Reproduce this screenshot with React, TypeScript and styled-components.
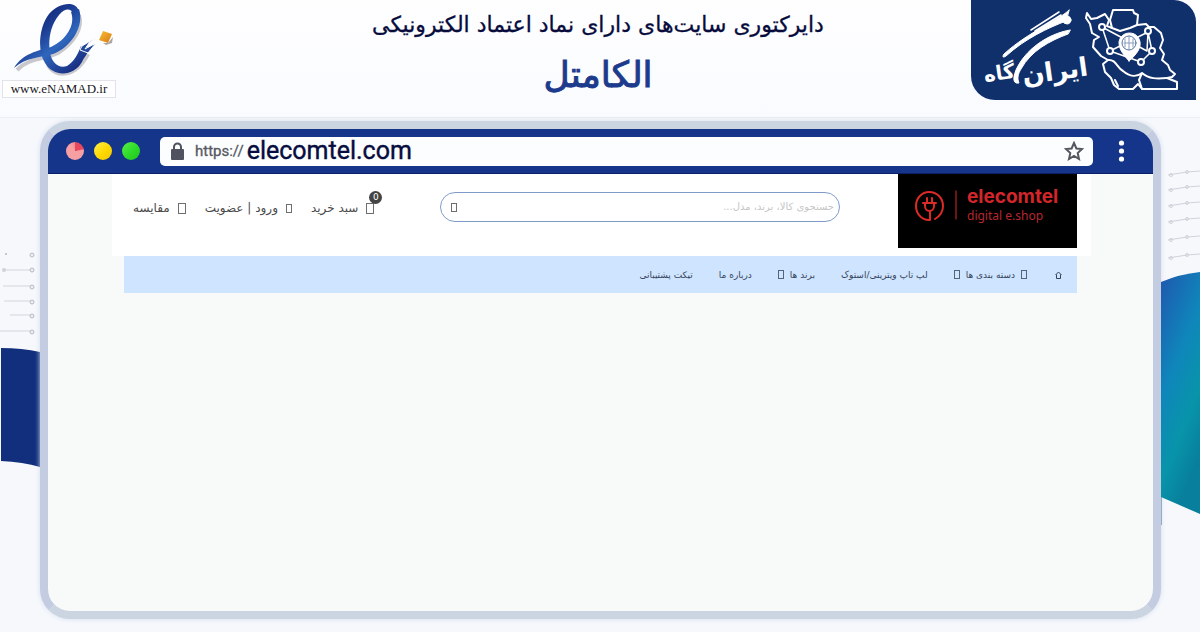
import React from "react";
import styled, { createGlobalStyle } from "styled-components";

const fa = `"DejaVu Sans", "Noto Sans", sans-serif`;

const Global = createGlobalStyle`
  * { box-sizing: border-box; }
  body { margin: 0; background: #f6f8fc; font-family: ${fa}; }
  a { color: inherit; text-decoration: none; }
  h1, p { margin: 0; font-weight: 400; }
`;

const Page = styled.div`
  min-height: 100vh;
  display: flex;
  flex-direction: column;
`;

const Header = styled.header`
  display: grid;
  grid-template-columns: 224px 1fr 228px;
  height: 118px;
  background: linear-gradient(#fefeff, #f9fbfe);
  border-bottom: 1px solid #eaeef5;
`;

const Enamad = styled.a`
  display: flex;
  flex-direction: column;
  width: 114px;
  margin-left: 2px;
  padding-top: 3px;
`;

const EnamadLabel = styled.span`
  height: 18px;
  margin-top: 2px;
  border: 1px solid #e2e3e8;
  background: #fff;
  text-align: center;
  font: 13px/16px "Liberation Serif", serif;
  color: #16161c;
`;

const Titles = styled.div`
  direction: rtl;
  text-align: center;
  padding-top: 8px;
`;

const Tagline = styled.p`
  font-size: 22px;
  line-height: 34px;
  color: #060b3c;
  white-space: nowrap;
  -webkit-text-stroke: 0.3px #060b3c;
`;

const SiteName = styled.h1`
  font-size: 36px;
  line-height: 66px;
  color: #1d3b8c;
  -webkit-text-stroke: 1px #1d3b8c;
`;

const Brand = styled.a`
  justify-self: end;
  width: 225px;
  height: 100px;
  margin-right: 4px;
  border-radius: 0 22px 0 24px;
  background: #10306c;
`;

const Stage = styled.main`
  flex: 1;
  display: grid;
  grid-template-columns: 40px 1fr 39px;
  padding: 3px 0 13px;
`;

const Side = styled.svg`
  display: block;
  width: 100%;
`;

const Browser = styled.section`
  display: flex;
  flex-direction: column;
  border: 8px solid #cbd5e2;
  border-right-color: #c3cce0;
  border-left-color: #c3cce0;
  border-radius: 30px;
  background: #f8f9f9;
  overflow: hidden;
  box-shadow: 0 0 5px #d5dded;
`;

const Chrome = styled.div`
  display: flex;
  align-items: center;
  height: 45px;
  padding: 0 28px 0 18px;
  background: #14358a;
  border-bottom: 1px solid #0b2065;
`;

const Lights = styled.div`
  display: flex;
  gap: 10px;
  margin-right: 20px;
`;

const Light = styled.span<{ $tone: string }>`
  width: 18px;
  height: 18px;
  border-radius: 50%;
  background: ${(p) => p.$tone};
`;

const Address = styled.div`
  flex: 1;
  display: flex;
  align-items: center;
  height: 29px;
  padding: 0 9px 0 10px;
  border-radius: 5px;
  background: #fcfdff;
  font-family: Roboto, sans-serif;
`;

const Scheme = styled.span`
  margin: 0 3px 0 10px;
  font-size: 15px;
  line-height: 24px;
  color: #555862;
  -webkit-text-stroke: 0.3px #555862;
`;

const Domain = styled.span`
  flex: 1;
  font-size: 25px;
  line-height: 28px;
  color: #070d3e;
  -webkit-text-stroke: 0.4px #070d3e;
`;

const IconButton = styled.button`
  display: flex;
  padding: 0;
  border: 0;
  background: none;
  color: #4a4a4a;
`;

const MenuButton = styled(IconButton)`
  margin-left: 25px;
`;

const Site = styled.div`
  direction: rtl;
  margin: 0 62px 0 64px;
`;

const SiteHead = styled.div`
  display: flex;
  height: 82px;
  padding: 0 14px 0 21px;
  background: #fff;
`;

const ShopLogo = styled.a`
  flex: none;
  display: flex;
  direction: ltr;
  width: 179px;
  height: 74px;
  padding: 13px 17px;
  background: #000;
  color: #d3262b;
`;

const ShopNames = styled.span`
  display: flex;
  flex-direction: column;
  margin-left: 10px;
`;

const ShopName = styled.span`
  font: 700 19px/20px Inter, sans-serif;
`;

const ShopSub = styled.span`
  font: 12px/18px "Noto Sans", sans-serif;
  color: #b8272f;
`;

const Search = styled.form`
  flex: 0 1 400px;
  display: flex;
  align-items: center;
  height: 30px;
  margin: 18px 58px 0 auto;
  padding: 0 5px 0 10px;
  border: 1px solid #7f9cc9;
  border-radius: 15px;
`;

const SearchInput = styled.input`
  flex: 1;
  min-width: 0;
  padding: 0;
  border: 0;
  outline: 0;
  background: none;
  font: 10px/20px ${fa};
  &::placeholder { color: #c6c6c6; opacity: 1; }
`;

const Account = styled.nav`
  display: flex;
  gap: 19px;
  padding-top: 24px;
  white-space: nowrap;
`;

const AccountLink = styled.a`
  position: relative;
  display: flex;
  align-items: center;
  gap: 8px;
  height: 20px;
  font-size: 12px;
  line-height: 20px;
  color: #4a4a4a;
`;

const Badge = styled.span`
  position: absolute;
  top: -7px;
  right: -8px;
  width: 13px;
  height: 13px;
  border-radius: 50%;
  background: #444;
  color: #fff;
  font-size: 9px;
  line-height: 13px;
  text-align: center;
`;

const Tofu = styled.span<{ $narrow?: boolean }>`
  flex: none;
  width: ${(p) => (p.$narrow ? 6 : 8)}px;
  height: ${(p) => (p.$narrow ? 9 : 11)}px;
  border: 1px solid currentColor;
  opacity: 0.8;
`;

const Menu = styled.nav`
  display: flex;
  align-items: center;
  gap: 26px;
  height: 37px;
  margin: 0 14px 0 12px;
  padding: 0 14px;
  background: #cfe4fe;
  color: #33435c;
  font-size: 9px;
  white-space: nowrap;
`;

const MenuLink = styled.a`
  display: flex;
  align-items: center;
  gap: 6px;
  line-height: 20px;
`;

function EnamadMark() {
  return (
    <svg width="114" height="75" viewBox="2 3 114 75" fill="none" aria-hidden="true">
      <defs>
        <linearGradient id="ribbon" gradientUnits="userSpaceOnUse" x1="20" y1="10" x2="75" y2="75">
          <stop offset="0" stopColor="#0f1f66" />
          <stop offset=".35" stopColor="#1b3a90" />
          <stop offset=".6" stopColor="#2f66bd" />
          <stop offset="1" stopColor="#14277a" />
        </linearGradient>
        <linearGradient id="gold" x1="0" y1="0" x2="1" y2="1">
          <stop offset="0" stopColor="#f8c034" />
          <stop offset="1" stopColor="#d97812" />
        </linearGradient>
      </defs>
      <path d="M17 70C30 57 44 60 58 53C74 43 83 28 79 15M48 65C56 79 76 77 88 54" stroke="#c8c7cc" strokeWidth="4" />
      <path d="M14 68C23 53 38 51 51 47C66 40 76 25 71 12L79 9C85 27 70 48 53 54C40 58 26 57 14 68Z" fill="url(#ribbon)" />
      <path d="M79 12C77 0 59 2 49 14C39 27 37 51 45 63C54 78 74 76 82 62C84 57 88 54 89 48L81 46C78 54 74 62 67 66C59 69 52 63 50 53C48 41 50 26 59 15C65 8 71 8 73 14Z" fill="url(#ribbon)" />
      <path d="M82 46L97 37L89 43L85 49L96 43L88 53L80 50Z" fill="#26489b" stroke="#fff" strokeWidth="1" />
      <path d="M99 40L103 31L112 34L108 43Z" fill="url(#gold)" />
      <path d="M103 43L108 43L113 37L112 43L106 45Z" fill="#aaa6a6" />
    </svg>
  );
}

function BrandMark() {
  return (
    <svg width="225" height="100" viewBox="971 0 225 100" fill="none" stroke="#fff" strokeLinecap="round" strokeLinejoin="round" role="img" aria-label="ایران‌گاه">
      <path d="M1087 13L1091 19L1097 18L1105 14L1109 20L1107 26L1112 28L1120 31L1130 28L1137 25L1146 24L1149 27L1154 27L1161 33L1163 40L1160 48L1164 54L1162 60L1168 65L1170 70L1175 74L1172 77L1167 78L1177 82V89H1142L1138 84L1133 89H1119L1114 85L1111 78L1105 72L1103 64L1108 60L1101 56L1093 47L1094 40L1099 37L1092 33L1090 24L1086 18Z" strokeWidth="2" />
      <path d="M1112 28L1110 20L1113 10H1133L1134 13L1138 15L1137 25M1108 60C1116 59 1117 68 1123 71C1130 77 1137 77 1142 73C1149 79 1157 79 1167 78M1142 89L1139 80L1142 73M1115 80L1118 86" strokeWidth="2" />
      <path d="M1102 27L1147 51L1148 32L1110 51ZM1102 27L1110 51L1141 62L1152 51L1148 32" strokeWidth="1.5" />
      <path d="M1129 61C1121 52 1119 48 1119 42C1121 30 1138 30 1140 42C1141 48 1137 54 1129 61Z" fill="#fff" />
      <circle cx="1129" cy="43" r="7" stroke="#56709f" />
      <path d="M1129 36V50M1125 39V47M1133 39V47M1124 43H1134" stroke="#8a9cbd" />
      {[[1102, 27], [1148, 31], [1152, 51], [1141, 62], [1110, 51]].map(([x, y]) => (
        <circle key={x} cx={x} cy={y} r="3" fill="#10306c" strokeWidth="2" />
      ))}
      <path d="M1070 30C1047 34 1025 50 1016 70C1012 80 1014 84 1019 83C1017 78 1018 74 1021 69C1031 51 1049 41 1068 34ZM1069 10C1061 19 1028 32 1004 54C1002 57 1003 58 1006 56C1026 38 1048 28 1066 21Z" fill="#fff" strokeWidth="1" />
      <path d="M1059 12L1031 30M1061 15L1035 31" strokeWidth="1.5" />
      <circle cx="1067" cy="20" r="4" fill="#fff" />
      <g fill="#fff" stroke="none" fontFamily="DejaVu Sans, sans-serif" fontWeight="700" textAnchor="middle">
        <text x="1055" y="80" fontSize="26" transform="rotate(-8 1055 72)">ایران</text>
        <text x="999" y="80" fontSize="20" transform="rotate(-8 998 72)">گاه</text>
      </g>
    </svg>
  );
}

function LeftDecor() {
  return (
    <Side height="360" viewBox="0 121 40 360" preserveAspectRatio="xMinYMin slice" aria-hidden="true">
      <path d="M1 348Q22 348 40 352V467Q23 462 1 461Z" fill="#112f7d" />
      <path d="M4 270H31M3 286H30M4 301H31M10 315H31M0 331H31" stroke="#d3d5dc" />
      {[255, 270, 287, 302, 316, 332].map((y) => (
        <circle key={y} cx="32" cy={y} r="2" fill="#eceef2" stroke="#b6bac4" />
      ))}
      <circle cx="6" cy="254" r="1" fill="#b6bac4" />
      <circle cx="4" cy="270" r="2" fill="#d0d3da" />
    </Side>
  );
}

function RightDecor() {
  return (
    <Side height="420" viewBox="1161 121 39 420" preserveAspectRatio="xMaxYMin slice" aria-hidden="true">
      <defs>
        <linearGradient id="teal" x1="0" y1="0" x2=".4" y2="1">
          <stop offset="0" stopColor="#1f57ae" />
          <stop offset=".45" stopColor="#0f86bb" />
          <stop offset=".75" stopColor="#0894aa" />
          <stop offset="1" stopColor="#087f9c" />
        </linearGradient>
      </defs>
      {[175, 190, 206, 222, 240, 258].map((y) => (
        <g key={y} stroke="#d0d2dc" fill="none">
          <path d={`M1168 ${y}L1187 ${y - 3}L1200 ${y - 4}`} />
          <circle cx="1187" cy={y - 3} r="1.5" />
          <circle cx="1171" cy={y} r="1.5" />
        </g>
      ))}
      <path d="M1161 282Q1180 274 1200 272V514L1161 497Z" fill="url(#teal)" />
      <path d="M1161 497V525" stroke="#3c6a9f" />
    </Side>
  );
}

function Plug() {
  return (
    <svg width="42" height="34" viewBox="0 0 42 34" fill="none" stroke="#dc2a26" strokeWidth="2" strokeLinecap="round" strokeLinejoin="round" aria-hidden="true">
      <path d="M14 33C6 33 1 26 1 19C1 11 7 5 14 5C22 5 28 11 28 19C28 25 25 29 20 32M15 33V25" />
      <path d="M8 16H21M10 16V19C10 22 12 24 14.500 24C17 24 19 22 19 19V16M12 11V16M17 11V16" />
      <path d="M41 4V32" strokeWidth="1" />
    </svg>
  );
}

export default function App() {
  return (
    <Page>
      <Global />
      <Header>
        <Enamad href="#enamad">
          <EnamadMark />
          <EnamadLabel>www.eNAMAD.ir</EnamadLabel>
        </Enamad>
        <Titles>
          <Tagline>دایرکتوری سایت‌های دارای نماد اعتماد الکترونیکی</Tagline>
          <SiteName>الکامتل</SiteName>
        </Titles>
        <Brand href="#irangah"><BrandMark /></Brand>
      </Header>
      <Stage>
        <LeftDecor />
        <Browser>
          <Chrome>
            <Lights>
              <Light $tone="conic-gradient(#e9475b 0 20%, #f6a0a4 24% 90%, #f28b92)" />
              <Light $tone="linear-gradient(135deg, #fff04a, #ffd800 55%, #efc800)" />
              <Light $tone="linear-gradient(135deg, #58ee4a, #2edb28 55%, #22c41e)" />
            </Lights>
            <Address>
              <svg width="15" height="18" viewBox="0 0 15 18" aria-hidden="true">
                <path d="M4 8V5a3.500 3.500 0 0 1 7 0V8" fill="none" stroke="#50535f" strokeWidth="2" />
                <rect x="1" y="7" width="13" height="11" rx="1" fill="#50535f" />
              </svg>
              <Scheme>https://</Scheme>
              <Domain>elecomtel.com</Domain>
              <IconButton aria-label="Bookmark">
                <svg width="20" height="20" viewBox="0 0 20 20" fill="none" stroke="#55575f" strokeWidth="2">
                  <path d="M10 2L12.400 7.500L18 8L13.700 12L15 18L10 15L5 18L6.300 12L2 8L7.600 7.500Z" />
                </svg>
              </IconButton>
            </Address>
            <MenuButton aria-label="Menu">
              <svg width="7" height="22" viewBox="0 0 7 22" fill="#fff">
                <circle cx="3.500" cy="3" r="2.600" />
                <circle cx="3.500" cy="11" r="2.600" />
                <circle cx="3.500" cy="19" r="2.600" />
              </svg>
            </MenuButton>
          </Chrome>
          <Site>
            <SiteHead>
              <ShopLogo href="#shop">
                <Plug />
                <ShopNames>
                  <ShopName>elecomtel</ShopName>
                  <ShopSub>digital e.shop</ShopSub>
                </ShopNames>
              </ShopLogo>
              <Search>
                <SearchInput aria-label="جستجو" placeholder="جستجوی کالا، برند، مدل..." />
                <IconButton type="button" aria-label="جستجو"><Tofu $narrow /></IconButton>
              </Search>
              <Account>
                <AccountLink href="#cart"><Tofu />سبد خرید<Badge>0</Badge></AccountLink>
                <AccountLink href="#login"><Tofu $narrow />ورود | عضویت</AccountLink>
                <AccountLink href="#compare"><Tofu />مقایسه</AccountLink>
              </Account>
            </SiteHead>
            <Menu>
              <MenuLink href="#home" aria-label="خانه">
                <svg width="10" height="8" viewBox="-2 0 10 8" fill="none" stroke="currentColor" aria-hidden="true">
                  <path d="M1.500 3.500V7.500H5.500V3.500M.5 4L3.500 1L6.500 4" />
                </svg>
              </MenuLink>
              <MenuLink href="#categories"><Tofu $narrow />دسته بندی ها<Tofu $narrow /></MenuLink>
              <MenuLink href="#laptops">لپ تاپ ویترینی/استوک</MenuLink>
              <MenuLink href="#brands">برند ها<Tofu $narrow /></MenuLink>
              <MenuLink href="#about">درباره ما</MenuLink>
              <MenuLink href="#ticket">تیکت پشتیبانی</MenuLink>
            </Menu>
          </Site>
        </Browser>
        <RightDecor />
      </Stage>
    </Page>
  );
}
